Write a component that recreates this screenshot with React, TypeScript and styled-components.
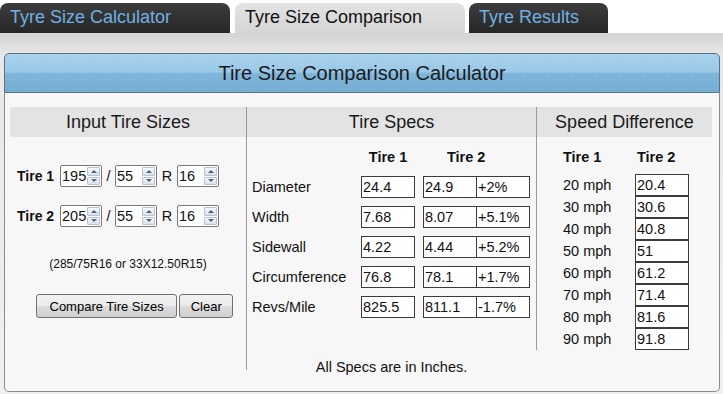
import React from "react";
import styled, { createGlobalStyle } from "styled-components";

const GlobalStyle = createGlobalStyle`
  html, body { margin: 0; padding: 0; background: #ffffff; }
  body { font-family: "Liberation Sans", Arial, Helvetica, sans-serif; color: #111; }
  * { box-sizing: border-box; }
`;

const Page = styled.div`
  width: 723px;
  height: 394px;
  display: flex;
  flex-direction: column;
  overflow: hidden;
`;

const TabBar = styled.nav`
  display: flex;
  align-items: stretch;
  height: 33px;
  padding-top: 3px;
  background: #ffffff;
`;

const Tab = styled.div<{ $active?: boolean; $width: number; $gap: number }>`
  width: ${(p) => p.$width}px;
  margin-left: ${(p) => p.$gap}px;
  padding: 0 0 2px 10px;
  line-height: 28px;
  font-size: 18px;
  white-space: nowrap;
  border-radius: 8px 8px 0 0;
  background: ${(p) =>
    p.$active
      ? "linear-gradient(#e3e3e3, #d5d5d5)"
      : "linear-gradient(#3d3d3d, #262626)"};
  color: ${(p) => (p.$active ? "#111111" : "#70b0e2")};
`;

const Stage = styled.main`
  flex: 1;
  display: flex;
  flex-direction: column;
  padding: 20px 3px 2px 4px;
  background: linear-gradient(#d3d3d3 0px, #e8e8e8 22px, #f0f0f0 100%);
`;

const Panel = styled.section`
  flex: 1;
  display: flex;
  flex-direction: column;
`;

const PanelHeader = styled.h1`
  margin: 0;
  height: 40px;
  line-height: 38px;
  text-align: center;
  font-size: 20px;
  font-weight: normal;
  color: #1b1b1b;
  border: 1px solid #5a7285;
  border-radius: 5px 5px 0 0;
  background:
    radial-gradient(rgba(255, 255, 255, 0.12) 0.6px, transparent 0.8px) 0 0 / 3px 3px,
    linear-gradient(#a8d2ee 0%, #98c7e7 48%, #7fb5da 51%, #73acd3 100%);
`;

const PanelBody = styled.div`
  flex: 1;
  display: flex;
  align-items: flex-start;
  padding: 14px 7px 0 5px;
  background: #f7f7f7;
  border: 1px solid #8a8a8a;
  border-top: none;
  border-radius: 0 0 5px 5px;
`;

const Column = styled.div<{ $width: number; $divider?: boolean }>`
  width: ${(p) => p.$width}px;
  display: flex;
  flex-direction: column;
  border-left: ${(p) => (p.$divider ? "1px solid #9a9a9a" : "none")};
`;

const ColumnTitle = styled.h2`
  margin: 0;
  height: 30px;
  line-height: 30px;
  background: #e3e3e3;
  font-size: 18px;
  font-weight: normal;
  text-align: center;
  color: #1a1a1a;
`;

/* ---------- column 1 ---------- */

const SizeRow = styled.div<{ $top: number }>`
  display: flex;
  align-items: center;
  height: 22px;
  margin-top: ${(p) => p.$top}px;
  padding-left: 7px;
  font-size: 14.5px;
`;

const RowLabel = styled.span`
  width: 43px;
  font-size: 14px;
  font-weight: bold;
`;

const Sep = styled.span<{ $width: number }>`
  width: ${(p) => p.$width}px;
  text-align: center;
  font-size: 14.5px;
`;

const SpinFrame = styled.div`
  width: 42px;
  height: 22px;
  display: flex;
  border: 1px solid #7a7a7a;
  border-radius: 2px;
  background: #ffffff;
`;

const SpinInput = styled.input`
  flex: 1;
  min-width: 0;
  border: none;
  outline: none;
  background: transparent;
  padding: 0 0 0 1px;
  font-family: inherit;
  font-size: 14.5px;
  color: #111;
`;

const Spinner = styled.div`
  width: 14px;
  display: flex;
  flex-direction: column;
  gap: 1px;
  padding: 1px 1px 1px 0;
`;

const SpinButton = styled.span<{ $up?: boolean }>`
  flex: 1;
  display: flex;
  align-items: center;
  justify-content: center;
  border: 1px solid #b6c2d0;
  border-radius: 1px;
  background: linear-gradient(#f5f8fb, #d9e2ec);
  &::after {
    content: "";
    width: 0;
    height: 0;
    border-left: 3px solid transparent;
    border-right: 3px solid transparent;
    ${(p) =>
      p.$up ? "border-bottom: 3px solid #51617e;" : "border-top: 3px solid #51617e;"}
  }
`;

const Note = styled.p`
  margin: 29px 0 0;
  line-height: 16px;
  font-size: 12px;
  text-align: center;
`;

const ButtonRow = styled.div`
  display: flex;
  gap: 2px;
  margin-top: 22px;
  padding-left: 26px;
`;

const Button = styled.button<{ $pad: number }>`
  height: 24px;
  padding: 0 ${(p) => p.$pad}px;
  border: 1px solid #707070;
  border-radius: 3px;
  font-family: inherit;
  font-size: 13px;
  color: #000;
  background: linear-gradient(#f2f2f2 0%, #ebebeb 48%, #dddddd 52%, #cfcfcf 100%);
`;

/* ---------- column 2 ---------- */

const ColumnInner = styled.div<{ $left: number }>`
  display: flex;
  flex-direction: column;
  padding-left: ${(p) => p.$left}px;
`;

const HeadRow = styled.div<{ $top: number }>`
  display: flex;
  height: 20px;
  line-height: 20px;
  margin-top: ${(p) => p.$top}px;
  font-size: 14.5px;
  font-weight: bold;
`;

const HeadCell = styled.span<{ $width?: number; $pad?: number; $center?: boolean }>`
  width: ${(p) => (p.$width ? `${p.$width}px` : "auto")};
  padding-left: ${(p) => p.$pad ?? 0}px;
  text-align: ${(p) => (p.$center ? "center" : "left")};
`;

const SpecList = styled.div`
  display: flex;
  flex-direction: column;
  gap: 8px;
  margin-top: 9px;
`;

const DataRow = styled.div`
  display: flex;
  align-items: center;
  height: 22px;
  font-size: 14.5px;
`;

const DataLabel = styled.span<{ $width: number }>`
  width: ${(p) => p.$width}px;
`;

const ValueBox = styled.span<{ $shift?: number }>`
  width: 54px;
  height: 22px;
  margin-left: ${(p) => p.$shift ?? 0}px;
  padding-left: 1px;
  line-height: 20px;
  border: 1px solid #3c3c3c;
  background: #ffffff;
  font-size: 14.5px;
`;

const Footnote = styled.p`
  margin: 40px 0 -6px;
  line-height: 18px;
  font-size: 14.5px;
  text-align: center;
`;

/* ---------- column 3 ---------- */

const SpeedList = styled.div`
  display: flex;
  flex-direction: column;
  margin-top: 7px;
`;

const tabs = [
  { label: "Tyre Size Calculator", width: 230, gap: 0 },
  { label: "Tyre Size Comparison", width: 230, gap: 5, active: true },
  { label: "Tyre Results", width: 139, gap: 4 },
];

const specs = [
  { label: "Diameter", t1: "24.4", t2: "24.9", diff: "+2%" },
  { label: "Width", t1: "7.68", t2: "8.07", diff: "+5.1%" },
  { label: "Sidewall", t1: "4.22", t2: "4.44", diff: "+5.2%" },
  { label: "Circumference", t1: "76.8", t2: "78.1", diff: "+1.7%" },
  { label: "Revs/Mile", t1: "825.5", t2: "811.1", diff: "-1.7%" },
];

const speeds = [
  ["20 mph", "20.4"],
  ["30 mph", "30.6"],
  ["40 mph", "40.8"],
  ["50 mph", "51"],
  ["60 mph", "61.2"],
  ["70 mph", "71.4"],
  ["80 mph", "81.6"],
  ["90 mph", "91.8"],
];

function SpinBox({ value }: { value: string }) {
  return (
    <SpinFrame>
      <SpinInput defaultValue={value} />
      <Spinner>
        <SpinButton $up />
        <SpinButton />
      </Spinner>
    </SpinFrame>
  );
}

function SizeInputs({ label, width, top }: { label: string; width: string; top: number }) {
  return (
    <SizeRow $top={top}>
      <RowLabel>{label}</RowLabel>
      <SpinBox value={width} />
      <Sep $width={13}>/</Sep>
      <SpinBox value="55" />
      <Sep $width={20}>R</Sep>
      <SpinBox value="16" />
    </SizeRow>
  );
}

export default function App() {
  return (
    <Page>
      <GlobalStyle />
      <TabBar>
        {tabs.map((t) => (
          <Tab key={t.label} $width={t.width} $gap={t.gap} $active={t.active}>
            {t.label}
          </Tab>
        ))}
      </TabBar>
      <Stage>
        <Panel>
          <PanelHeader>Tire Size Comparison Calculator</PanelHeader>
          <PanelBody>
            <Column $width={236}>
              <ColumnTitle>Input Tire Sizes</ColumnTitle>
              <SizeInputs label="Tire 1" width="195" top={28} />
              <SizeInputs label="Tire 2" width="205" top={18} />
              <Note>(285/75R16 or 33X12.50R15)</Note>
              <ButtonRow>
                <Button $pad={12.5}>Compare Tire Sizes</Button>
                <Button $pad={10.5}>Clear</Button>
              </ButtonRow>
            </Column>

            <Column $width={290} $divider>
              <ColumnTitle>Tire Specs</ColumnTitle>
              <ColumnInner $left={5}>
                <HeadRow $top={10}>
                  <HeadCell $width={109} />
                  <HeadCell $width={54} $center>
                    Tire 1
                  </HeadCell>
                  <HeadCell $pad={32}>Tire 2</HeadCell>
                </HeadRow>
                <SpecList>
                  {specs.map((s) => (
                    <DataRow key={s.label}>
                      <DataLabel $width={109}>{s.label}</DataLabel>
                      <ValueBox>{s.t1}</ValueBox>
                      <ValueBox $shift={8}>{s.t2}</ValueBox>
                      <ValueBox $shift={-1}>{s.diff}</ValueBox>
                    </DataRow>
                  ))}
                </SpecList>
              </ColumnInner>
              <Footnote>All Specs are in Inches.</Footnote>
            </Column>

            <Column $width={176} $divider>
              <ColumnTitle>Speed Difference</ColumnTitle>
              <ColumnInner $left={26}>
                <HeadRow $top={10}>
                  <HeadCell $width={72}>Tire 1</HeadCell>
                  <HeadCell $pad={2}>Tire 2</HeadCell>
                </HeadRow>
                <SpeedList>
                  {speeds.map(([mph, v]) => (
                    <DataRow key={mph}>
                      <DataLabel $width={72}>{mph}</DataLabel>
                      <ValueBox>{v}</ValueBox>
                    </DataRow>
                  ))}
                </SpeedList>
              </ColumnInner>
            </Column>
          </PanelBody>
        </Panel>
      </Stage>
    </Page>
  );
}
